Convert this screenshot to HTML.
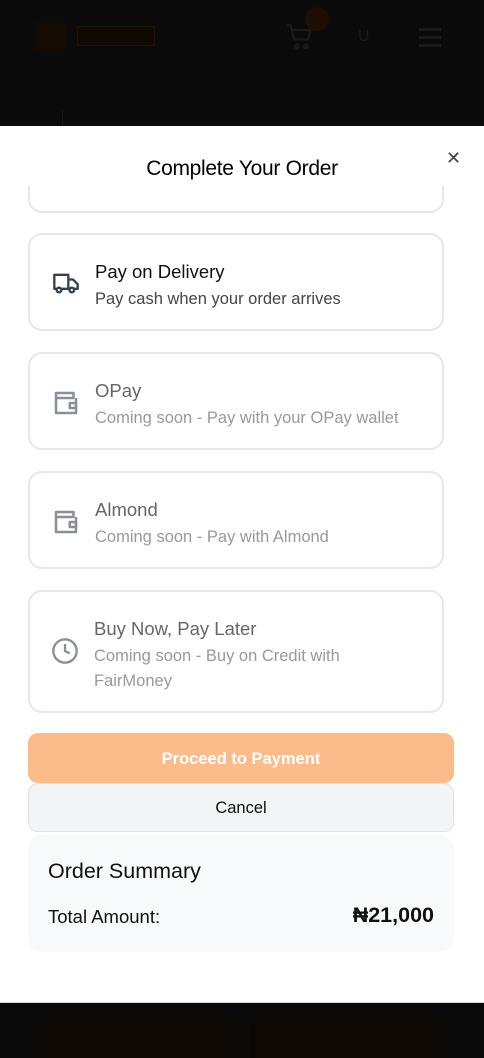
<!DOCTYPE html>
<html><head><style>
*{box-sizing:border-box;margin:0;padding:0}
body{width:484px;height:1050px;background:#0a0a0a;font-family:"Liberation Sans",sans-serif;position:relative;overflow:hidden}
.top{position:absolute;left:0;top:0;width:484px;height:126px;background:#0a0a0a}
.modal{position:absolute;left:0;top:126px;width:484px;height:877px;background:#fff;border-bottom:1px solid #ddd;overflow:hidden}
h1{position:absolute;top:31px;width:100%;text-align:center;font-size:21px;font-weight:normal;color:#000;letter-spacing:-0.3px}
.x{position:absolute;left:446px;top:22px;font-size:18px;color:#444;font-weight:300}
.card{position:absolute;left:28px;width:416px;border:2px solid #e5e7eb;border-radius:14px;background:#fff}
.card svg{position:absolute;left:21px}
.t{position:absolute;left:65px;font-size:18.5px;color:#111}
.s{position:absolute;left:65px;font-size:16.5px;color:#444;line-height:25px}
.dim .t{color:#666}.dim .s{color:#999}
.btn{position:absolute;left:28px;width:426px;text-align:center;font-size:16.5px}
</style></head><body>
<div class="top">
<div style="position:absolute;left:36px;top:22px;width:30px;height:28px;background:#140b03"></div>
<div style="position:absolute;left:77px;top:26px;width:78px;height:20px;border:1px solid #1e1304;background:#0f0902"></div>
<svg style="position:absolute;left:286px;top:23px" width="28" height="28" viewBox="0 0 24 24" fill="none" stroke="#1a1a1a" stroke-width="2"><path d="M1 2h3l3 12h12l2-8H6"/><circle cx="9" cy="20" r="1.5"/><circle cx="17" cy="20" r="1.5"/></svg>
<div style="position:absolute;left:305px;top:7px;width:24px;height:24px;border-radius:50%;background:#1e0f02"></div>
<div style="position:absolute;left:358px;top:28px;color:#1a1a1a;font-size:16px">U</div>
<div style="position:absolute;left:419px;top:28px;width:22px;height:3px;background:#1a1a1a;box-shadow:0 8px #1a1a1a,0 16px #1a1a1a"></div>
<div style="position:absolute;left:62px;top:110px;width:1px;height:16px;background:#151515"></div>
</div>
<div class="modal">
<div class="card" style="top:-40px;height:127px"></div>
<div style="position:absolute;left:0;top:0;width:484px;height:60px;background:#fff"></div>
<h1>Complete Your Order</h1><div class="x">✕</div>
<div class="card" style="top:107px;height:98px">
<svg style="top:34px" width="30" height="28" viewBox="0 0 24 24" fill="none" stroke="#374151" stroke-width="2" stroke-linejoin="round"><path d="M2 5h12v12H2zM14 9h4l4 4v4h-8z"/><circle cx="6" cy="18" r="2" fill="#fff"/><circle cx="17" cy="18" r="2" fill="#fff"/></svg>
<div class="t" style="top:26px">Pay on Delivery</div>
<div class="s" style="top:52px">Pay cash when your order arrives</div></div>
<div class="card dim" style="top:226px;height:98px">
<svg style="top:34px" width="30" height="30" viewBox="0 0 24 24" fill="none" stroke="#8a8f98" stroke-width="2" stroke-linejoin="round"><path d="M4 4h14v4H4zM4 4v16h16V8"/><path d="M15 12h5v4h-5z"/></svg>
<div class="t" style="top:26px">OPay</div>
<div class="s" style="top:52px">Coming soon - Pay with your OPay wallet</div></div>
<div class="card dim" style="top:345px;height:98px">
<svg style="top:34px" width="30" height="30" viewBox="0 0 24 24" fill="none" stroke="#8a8f98" stroke-width="2" stroke-linejoin="round"><path d="M4 4h14v4H4zM4 4v16h16V8"/><path d="M15 12h5v4h-5z"/></svg>
<div class="t" style="top:26px">Almond</div>
<div class="s" style="top:52px">Coming soon - Pay with Almond</div></div>
<div class="card dim" style="top:464px;height:123px">
<svg style="top:45px" width="28" height="28" viewBox="0 0 24 24" fill="none" stroke="#8a8f98" stroke-width="2"><circle cx="12" cy="12" r="10"/><path d="M12 6v6l4 2"/></svg>
<div class="t" style="top:26px;left:64px">Buy Now, Pay Later</div>
<div class="s" style="top:52px;left:64px">Coming soon - Buy on Credit with<br>FairMoney</div></div>
<div class="btn" style="top:607px;height:50px;line-height:52px;background:#fbbb8a;border-radius:10px;color:#fff;font-weight:bold">Proceed to Payment</div>
<div class="btn" style="top:657px;height:49px;line-height:49px;background:#f3f4f6;border:1px solid #e0e2e6;border-radius:10px;color:#111">Cancel</div>
<div style="position:absolute;left:28px;top:709px;width:426px;height:117px;background:#f8f9fb;border-radius:14px">
<div style="position:absolute;left:20px;top:24px;font-size:21.5px;color:#111">Order Summary</div>
<div style="position:absolute;left:20px;top:71px;font-size:18.5px;color:#111">Total Amount:</div>
<div style="position:absolute;right:20px;top:68px;font-size:21.5px;font-weight:bold;color:#111">₦21,000</div></div>
</div>
<div style="position:absolute;left:42px;top:1018px;width:189px;height:40px;background:#0d0803"></div>
<div style="position:absolute;left:251px;top:1018px;width:189px;height:40px;background:#0d0803"></div>
</body></html>
